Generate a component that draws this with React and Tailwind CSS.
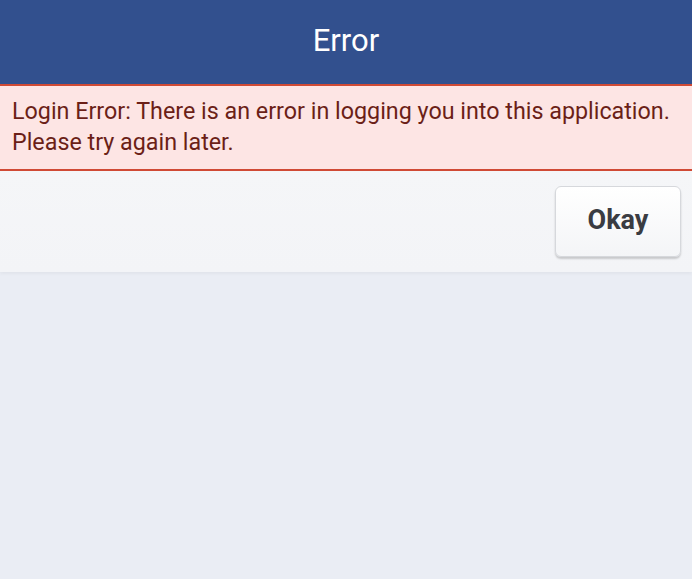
import React from 'react';

export default function App() {
  return (
    <div className="w-[692px] h-[579px] bg-[#eaedf4] flex flex-col" style={{ fontFamily: 'Roboto, "Liberation Sans", sans-serif' }}>
      <div className="h-[84px] bg-[#32508e] flex items-center justify-center pb-[4px]">
        <span className="text-white text-[31px] leading-none">Error</span>
      </div>
      <div className="border-y-2 border-[#d04a35] bg-[#fde5e4] px-3 pt-[10px] pb-[11px]">
        <p className="text-[#6b1f17] text-[23.3px] leading-[31px] whitespace-nowrap">
          Login Error: There is an error in logging you into this application.
          <br />
          Please try again later.
        </p>
      </div>
      <div className="bg-gradient-to-b from-[#f5f6f8] to-[#f3f4f7] h-[101px] flex justify-end pt-[15px] pr-[11px] shadow-[0_2px_3px_rgba(0,0,0,0.04)]">
        <button className="w-[126px] h-[71px] rounded-[6px] border border-[#d6d8dc] bg-gradient-to-b from-white to-[#f4f5f7] shadow-[0_2px_2px_rgba(0,0,0,0.18)] text-[#3a3c42] font-bold text-[27px] pb-[2px]">
          Okay
        </button>
      </div>
    </div>
  );
}
